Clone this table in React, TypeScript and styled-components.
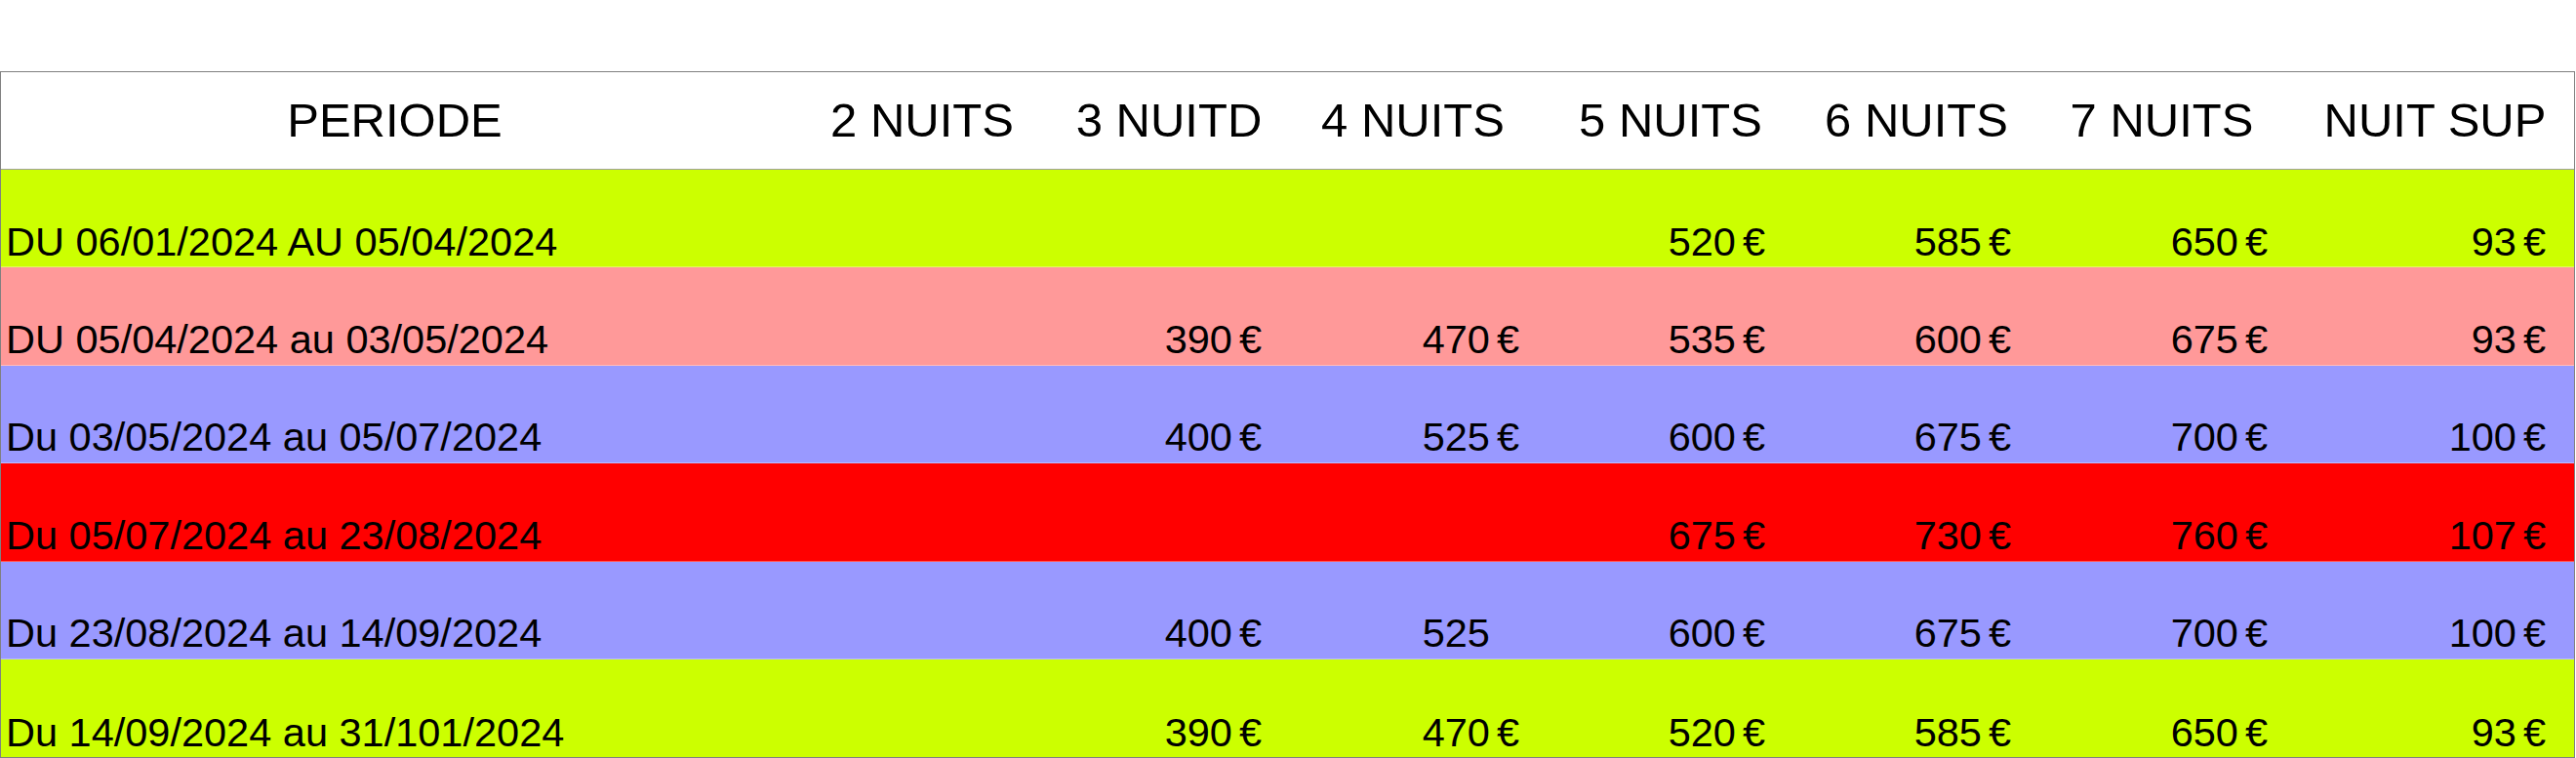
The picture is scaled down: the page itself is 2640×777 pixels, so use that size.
import React from 'react';
import styled, { createGlobalStyle } from 'styled-components';

const COLUMNS = '815px 258px 248px 264px 252px 252px 263px 285px';

const GlobalStyle = createGlobalStyle`
    html, body {
        margin: 0;
        padding: 0;
        background: #ffffff;
    }
    body {
        font-family: "Liberation Sans", Arial, sans-serif;
        color: #000000;
    }
`;

const Page = styled.div`
    width: 2640px;
    padding-top: 73px;
`;

const Table = styled.div`
    width: 2639px;
    box-sizing: border-box;
    border: 1px solid #808080;
`;

const HeaderRow = styled.div`
    display: grid;
    grid-template-columns: ${COLUMNS};
    height: 100px;
    box-sizing: border-box;
    border-bottom: 1px solid #a0a0a0;
    background: #ffffff;
`;

// some titles sit a little left of the column centre in the sheet
const HeadCell = styled.div<{ $shift: number }>`
    display: flex;
    align-items: center;
    justify-content: center;
    padding-right: ${(p) => p.$shift}px;
    font-size: 49px;
    line-height: 1;
    white-space: nowrap;
`;

const Row = styled.div<{ $bg: string }>`
    display: grid;
    grid-template-columns: ${COLUMNS};
    height: 100.4px;
    box-sizing: border-box;
    background: ${(p) => p.$bg};
    border-bottom: 1px solid rgba(255, 255, 255, 0.35);

    &:last-child {
        border-bottom: none;
    }
`;

const Cell = styled.div<{ $left?: boolean }>`
    display: flex;
    align-items: flex-end;
    justify-content: ${(p) => (p.$left ? 'flex-start' : 'flex-end')};
    padding: ${(p) => (p.$left ? '0 0 2px 5px' : '0 29px 2px 0')};
    font-size: 41.5px;
    line-height: 1.15;
    white-space: nowrap;
`;

// the sheet uses a narrow gap before the sign
const Euro = styled.span<{ $hidden?: boolean }>`
    margin-left: 7px;
    visibility: ${(p) => (p.$hidden ? 'hidden' : 'visible')};
`;

const headers: [string, number][] = [
    ['PERIODE', 8],
    ['2 NUITS', 0],
    ['3 NUITD', 0],
    ['4 NUITS', 12],
    ['5 NUITS', 0],
    ['6 NUITS', 0],
    ['7 NUITS', 12],
    ['NUIT SUP', 0],
];

type Price = number | string | null;

const rows: { period: string; bg: string; prices: Price[] }[] = [
    { period: 'DU 06/01/2024 AU 05/04/2024', bg: '#ccff00', prices: [null, null, null, 520, 585, 650, 93] },
    { period: 'DU 05/04/2024 au 03/05/2024', bg: '#ff9999', prices: [null, 390, 470, 535, 600, 675, 93] },
    { period: 'Du 03/05/2024 au 05/07/2024', bg: '#9999ff', prices: [null, 400, 525, 600, 675, 700, 100] },
    { period: 'Du 05/07/2024 au 23/08/2024', bg: '#ff0000', prices: [null, null, null, 675, 730, 760, 107] },
    { period: 'Du 23/08/2024 au 14/09/2024', bg: '#9999ff', prices: [null, 400, '525', 600, 675, 700, 100] },
    { period: 'Du 14/09/2024 au 31/101/2024', bg: '#ccff00', prices: [null, 390, 470, 520, 585, 650, 93] },
];

// numbers get the euro sign, plain strings keep the gap but no sign
const PriceCell = ({ value }: { value: Price }) => {
    if (value === null) return <Cell />;
    return (
        <Cell>
            {value}
            <Euro $hidden={typeof value === 'string'}>€</Euro>
        </Cell>
    );
};

const App = () => {
    return (
        <Page>
            <GlobalStyle />
            <Table>
                <HeaderRow>
                    {headers.map(([h, shift]) => (
                        <HeadCell key={h} $shift={shift}>
                            {h}
                        </HeadCell>
                    ))}
                </HeaderRow>
                {rows.map((r) => (
                    <Row key={r.period} $bg={r.bg}>
                        <Cell $left>{r.period}</Cell>
                        {r.prices.map((p, i) => (
                            <PriceCell key={i} value={p} />
                        ))}
                    </Row>
                ))}
            </Table>
        </Page>
    );
};

export default App;
